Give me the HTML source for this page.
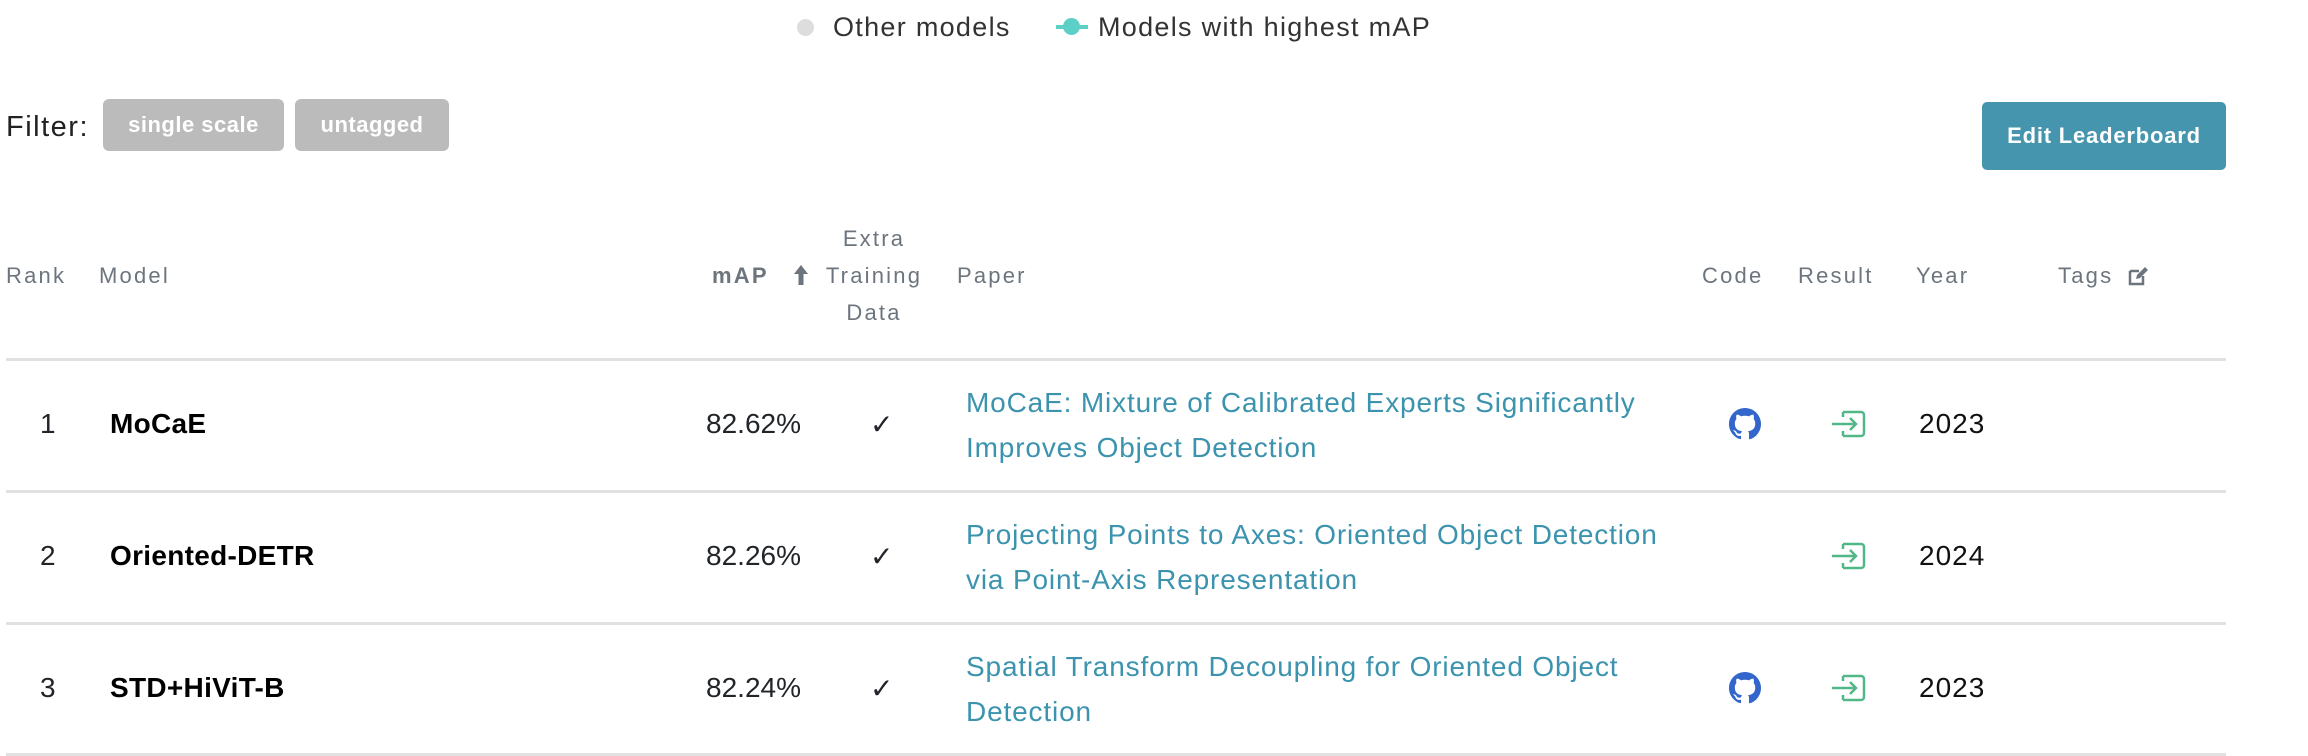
<!DOCTYPE html>
<html><head><meta charset="utf-8"><style>
*{margin:0;padding:0;box-sizing:border-box}
body{width:2308px;height:756px;background:#fff;font-family:"Liberation Sans",sans-serif;position:relative;overflow:hidden;color:#212529}
.a{position:absolute;white-space:nowrap}
.h{color:#6c757d;font-size:22px;letter-spacing:2.2px;line-height:22px}
.line{position:absolute;left:6px;width:2220px;height:3px;background:#e1e1e1}
.rk{font-size:28px}
.md{font-size:28px;font-weight:bold;color:#000;letter-spacing:0.3px}
.mp{font-size:28px;text-align:right;width:200px}
.pp{font-size:28px;color:#3b93ae;line-height:45px;letter-spacing:0.85px}
.yr{font-size:28px;color:#111;letter-spacing:1px}
.badge{position:absolute;top:99px;height:52px;background:#bbb;border-radius:6px;color:#fff;font-weight:bold;font-size:22px;line-height:52px;text-align:center;letter-spacing:0.5px}
</style></head><body>
<div class="a" style="left:797px;top:19px;width:17px;height:17px;border-radius:50%;background:#ddd"></div>
<div class="a" style="left:833px;top:12px;font-size:27px;color:#333;letter-spacing:1.3px">Other models</div>
<div class="a" style="left:1056px;top:25px;width:32px;height:4px;background:#5ccfc7"></div>
<div class="a" style="left:1063px;top:18px;width:17px;height:17px;border-radius:50%;background:#5ccfc7"></div>
<div class="a" style="left:1098px;top:12px;font-size:27px;color:#333;letter-spacing:1.3px">Models with highest mAP</div>

<div class="a" style="left:6px;top:111px;font-size:29px;color:#222;letter-spacing:1.5px">Filter:</div>
<div class="badge" style="left:103px;width:181px">single scale</div>
<div class="badge" style="left:295px;width:154px">untagged</div>
<div class="a" style="left:1982px;top:102px;width:244px;height:68px;background:#4595ae;border-radius:5px;color:#fff;font-weight:bold;font-size:22px;line-height:68px;text-align:center;letter-spacing:0.8px">Edit Leaderboard</div>

<div class="a h" style="left:6px;top:265px">Rank</div>
<div class="a h" style="left:99px;top:265px">Model</div>
<div class="a h" style="left:712px;top:265px;font-weight:bold">mAP</div>
<svg class="a" style="left:792px;top:264px" width="18" height="22" viewBox="0 0 18 22"><path d="M9 1L2 10h4.5v11h5V10H16z" fill="#6c757d"/></svg>
<div class="a h" style="left:814px;top:220px;width:120px;text-align:center;line-height:37px;white-space:normal">Extra<br>Training<br>Data</div>
<div class="a h" style="left:957px;top:265px">Paper</div>
<div class="a h" style="left:1702px;top:265px">Code</div>
<div class="a h" style="left:1798px;top:265px">Result</div>
<div class="a h" style="left:1916px;top:265px">Year</div>
<div class="a h" style="left:2058px;top:265px">Tags</div>
<svg class="a" style="left:2128px;top:266px" width="20" height="20" viewBox="0 0 20 20"><path d="M2 5h9M2 5v13h13V10" stroke="#6c757d" stroke-width="2.5" fill="none"/><path d="M8 13l1-4 8-8 3 3-8 8z" fill="#6c757d"/></svg>
<div class="line" style="top:358px"></div>
<div class="line" style="top:490px"></div>
<div class="line" style="top:622px"></div>
<div class="line" style="top:753px"></div>

<div class="a rk" style="left:40px;top:408px">1</div>
<div class="a md" style="left:110px;top:408px">MoCaE</div>
<div class="a mp" style="left:601px;top:408px">82.62%</div>
<div class="a" style="left:870px;top:408px;font-size:28px">✓</div>
<div class="a pp" style="left:966px;top:380px">MoCaE: Mixture of Calibrated Experts Significantly<br>Improves Object Detection</div>

<div class="a rk" style="left:40px;top:540px">2</div>
<div class="a md" style="left:110px;top:540px">Oriented-DETR</div>
<div class="a mp" style="left:601px;top:540px">82.26%</div>
<div class="a" style="left:870px;top:540px;font-size:28px">✓</div>
<div class="a pp" style="left:966px;top:512px">Projecting Points to Axes: Oriented Object Detection<br>via Point-Axis Representation</div>

<div class="a rk" style="left:40px;top:672px">3</div>
<div class="a md" style="left:110px;top:672px">STD+HiViT-B</div>
<div class="a mp" style="left:601px;top:672px">82.24%</div>
<div class="a" style="left:870px;top:672px;font-size:28px">✓</div>
<div class="a pp" style="left:966px;top:644px">Spatial Transform Decoupling for Oriented Object<br>Detection</div>

<svg class="a" style="left:1729px;top:408px" width="32" height="32" viewBox="0 0 16 16"><path fill="#3366cc" d="M8 0C3.58 0 0 3.58 0 8c0 3.54 2.29 6.53 5.470 7.59.4.07.55-.17.55-.38v-1.33c-2.23.48-2.7-1.07-2.7-1.07-.36-.93-.89-1.17-.89-1.17-.73-.5.06-.49.06-.49.8.06 1.23.83 1.23.83.71 1.22 1.87.87 2.33.66.07-.52.28-.87.51-1.07-1.78-.2-3.64-.89-3.64-3.95 0-.87.31-1.59.82-2.15-.08-.2-.36-1.02.08-2.12 0 0 .67-.21 2.2.82.64-.18 1.32-.27 2-.27.68 0 1.36.09 2 .27 1.53-1.04 2.2-.82 2.2-.82.44 1.1.16 1.92.08 2.12.51.56.82 1.27.82 2.15 0 3.07-1.87 3.75-3.65 3.95.29.25.54.73.54 1.48v2.2c0 .21.15.46.55.38A8.013 8.013 0 0016 8c0-4.42-3.58-8-8-8z"/></svg>
<svg class="a" style="left:1729px;top:672px" width="32" height="32" viewBox="0 0 16 16"><path fill="#3366cc" d="M8 0C3.58 0 0 3.58 0 8c0 3.54 2.29 6.53 5.470 7.59.4.07.55-.17.55-.38v-1.33c-2.23.48-2.7-1.07-2.7-1.07-.36-.93-.89-1.17-.89-1.17-.73-.5.06-.49.06-.49.8.06 1.23.83 1.23.83.71 1.22 1.87.87 2.33.66.07-.52.28-.87.51-1.07-1.78-.2-3.64-.89-3.64-3.95 0-.87.31-1.59.82-2.15-.08-.2-.36-1.02.08-2.12 0 0 .67-.21 2.2.82.64-.18 1.32-.27 2-.27.68 0 1.36.09 2 .27 1.53-1.04 2.2-.82 2.2-.82.44 1.1.16 1.92.08 2.12.51.56.82 1.27.82 2.15 0 3.07-1.87 3.75-3.65 3.95.29.25.54.73.54 1.48v2.2c0 .21.15.46.55.38A8.013 8.013 0 0016 8c0-4.42-3.58-8-8-8z"/></svg>

<svg class="a" style="left:1831px;top:410px" width="36" height="28" viewBox="0 0 36 28"><path d="M12 2h18a3 3 0 0 1 3 3v18a3 3 0 0 1-3 3H12M12 2v5M12 26v-5M1 14h24M19 8l6 6-6 6" stroke="#52b788" stroke-width="2.5" fill="none"/></svg>
<svg class="a" style="left:1831px;top:542px" width="36" height="28" viewBox="0 0 36 28"><path d="M12 2h18a3 3 0 0 1 3 3v18a3 3 0 0 1-3 3H12M12 2v5M12 26v-5M1 14h24M19 8l6 6-6 6" stroke="#52b788" stroke-width="2.5" fill="none"/></svg>
<svg class="a" style="left:1831px;top:674px" width="36" height="28" viewBox="0 0 36 28"><path d="M12 2h18a3 3 0 0 1 3 3v18a3 3 0 0 1-3 3H12M12 2v5M12 26v-5M1 14h24M19 8l6 6-6 6" stroke="#52b788" stroke-width="2.5" fill="none"/></svg>

<div class="a yr" style="left:1919px;top:408px">2023</div>
<div class="a yr" style="left:1919px;top:540px">2024</div>
<div class="a yr" style="left:1919px;top:672px">2023</div>
</body></html>
